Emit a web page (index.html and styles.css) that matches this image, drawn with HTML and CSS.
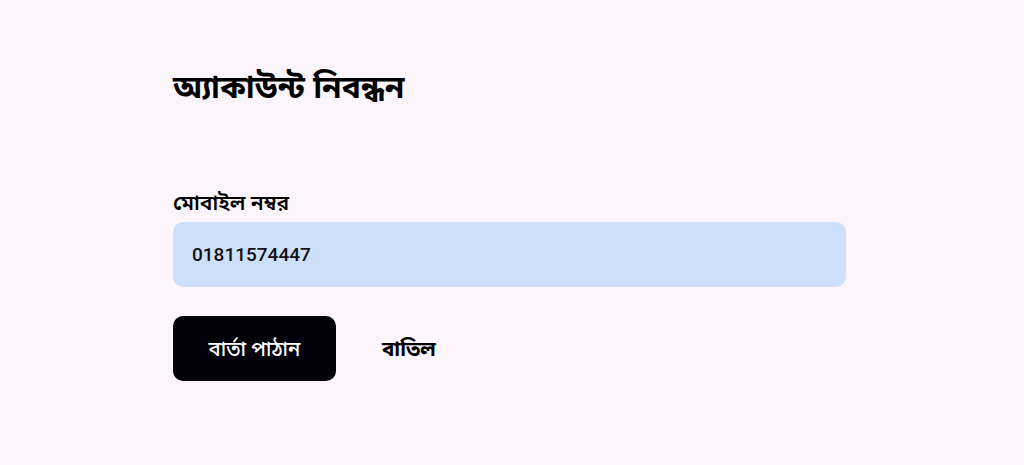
FILE: index.html
```html
<!DOCTYPE html>
<html lang="bn">
<head>
<meta charset="utf-8">
<title>অ্যাকাউন্ট নিবন্ধন</title>
<link rel="stylesheet" href="styles.css">
</head>
<body>
<main class="page">
  <h1 class="title">অ্যাকাউন্ট নিবন্ধন</h1>
  <form class="form">
    <label class="label" for="mobile">মোবাইল নম্বর</label>
    <input class="input" id="mobile" type="text" value="01811574447">
    <div class="actions">
      <button class="btn-primary" type="button">বার্তা পাঠান</button>
      <button class="btn-link" type="button">বাতিল</button>
    </div>
  </form>
</main>
</body>
</html>
```
FILE: styles.css
```css
html, body {
  margin: 0;
  padding: 0;
  background: #fcf5fc;
}
body {
  font-family: "Noto Sans", "Noto Sans Bengali", "Liberation Sans", sans-serif;
  color: #000;
}
.page {
  padding: 62px 0 0 173px;
  width: 673px;
}
.title {
  margin: 0;
  font-size: 31.7px;
  font-weight: 700;
  line-height: 48px;
}
.form {
  display: flex;
  flex-direction: column;
  margin-top: 78px;
}
.label {
  font-size: 21px;
  font-weight: 600;
  line-height: 28px;
  margin-bottom: 6px;
}
.input {
  box-sizing: border-box;
  height: 65px;
  width: 673px;
  border: none;
  border-radius: 10px;
  background: #cde0fb;
  padding: 0 19px;
  font-family: Roboto, "Liberation Sans", sans-serif;
  font-size: 19px;
  font-weight: 500;
  color: #111;
  outline: none;
}
.actions {
  display: flex;
  align-items: center;
  gap: 46px;
  margin-top: 29px;
}
.btn-primary {
  width: 163px;
  height: 65px;
  border: none;
  border-radius: 10px;
  background: #03020a;
  color: #fff;
  font-family: inherit;
  font-size: 20.3px;
  font-weight: 500;
}
.btn-link {
  border: none;
  background: none;
  padding: 0;
  font-family: inherit;
  font-size: 20.5px;
  font-weight: 700;
  color: #000;
}
```
